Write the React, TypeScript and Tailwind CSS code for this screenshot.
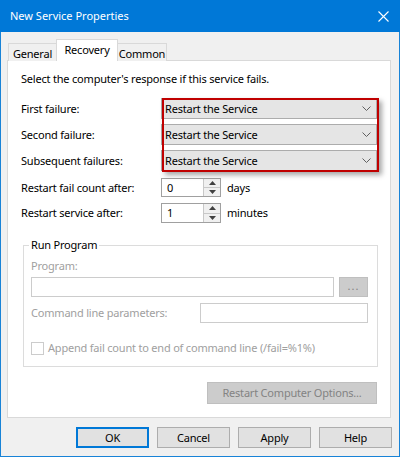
import React from "react";

const font = "font-['Noto_Sans',sans-serif] text-[11px] leading-[16px] tracking-[-0.2px]";

const Chevron = () => (
  <svg width="9" height="5" viewBox="0 0 9 5" className="shrink-0">
    <path d="M0.5 0.5 L4.5 4.5 L8.5 0.5" fill="none" stroke="#606060" strokeWidth="1" />
  </svg>
);

const Combo = ({ value }: { value: string }) => (
  <div className="flex h-[21px] w-[216px] items-center justify-between border border-[#acacac] bg-[#e5e5e5] pl-[3px] pr-[5px] text-black">
    <span>{value}</span>
    <Chevron />
  </div>
);

const Spinner = ({ value, h }: { value: string; h: string }) => (
  <div className={`flex w-[60px] border border-[#a0a0a0] bg-white ${h}`}>
    <div className="flex flex-1 items-center pl-[5px]">{value}</div>
    <div className="flex w-[17px] flex-col border-l border-[#c8c8c8] bg-[#f0f0f0]">
      <div className="flex flex-1 items-center justify-center border-b border-[#c8c8c8]">
        <svg width="7" height="4" viewBox="0 0 7 4">
          <path d="M0 4 L3.5 0 L7 4 Z" fill="#404040" />
        </svg>
      </div>
      <div className="flex flex-1 items-center justify-center">
        <svg width="7" height="4" viewBox="0 0 7 4">
          <path d="M0 0 L3.5 4 L7 0 Z" fill="#404040" />
        </svg>
      </div>
    </div>
  </div>
);

const Row = ({ label, children, className }: { label: string; children: React.ReactNode; className?: string }) => (
  <div className={`flex items-center ${className ?? ""}`}>
    <div className="w-[140px] shrink-0">{label}</div>
    {children}
  </div>
);

const DialogButton = ({ label, primary }: { label: string; primary?: boolean }) => (
  <button
    className={`flex h-[21px] w-[73px] items-center justify-center bg-[#e1e1e1] text-black ${
      primary ? "border-2 border-[#0078d7]" : "border border-[#adadad]"
    }`}
  >
    {label}
  </button>
);

export default function App() {
  return (
    <div className={`flex h-[457px] w-[400px] flex-col border-x border-b border-[#1883d7] bg-[#f0f0f0] text-black ${font}`}>
      {/* title bar */}
      <div className="-mx-px flex h-[32px] shrink-0 items-center justify-between bg-[#0078d7] pl-[10px] pr-[11px] text-white">
        <span className="text-[11px] tracking-normal">New Service Properties</span>
        <svg width="11" height="11" viewBox="0 0 11 11">
          <path d="M0.5 0.5 L10.5 10.5 M10.5 0.5 L0.5 10.5" stroke="white" strokeWidth="1.1" />
        </svg>
      </div>

      {/* tabs */}
      <div className="relative z-10 -mb-px ml-[7px] mt-[7px] flex h-[22px] items-end">
        <div className="flex h-[18px] w-[49px] items-center justify-center border border-b-0 border-[#d9d9d9] bg-[#f0f0f0] pt-[2px]">
          General
        </div>
        <div className="-mx-px flex h-[22px] w-[62px] items-start justify-center border border-b-0 border-[#d9d9d9] bg-white pt-[2px]">
          Recovery
        </div>
        <div className="flex h-[18px] w-[50px] items-center justify-center border border-b-0 border-[#d9d9d9] bg-[#f0f0f0] pt-[2px]">
          Common
        </div>
      </div>

      {/* panel */}
      <div className="relative ml-[6px] flex h-[358px] w-[384px] flex-col border border-[#d9d9d9] bg-white pl-[13px]">
        <div className="mt-[10px] h-4">Select the computer's response if this service fails.</div>

        <Row label="First failure:" className="mt-[11px]">
          <Combo value="Restart the Service" />
        </Row>
        <Row label="Second failure:" className="mt-[5px]">
          <Combo value="Restart the Service" />
        </Row>
        <Row label="Subsequent failures:" className="mt-[5px]">
          <Combo value="Restart the Service" />
        </Row>

        <Row label="Restart fail count after:" className="mt-[7px]">
          <Spinner value="0" h="h-[19px]" />
          <span className="ml-[6px]">days</span>
        </Row>
        <Row label="Restart service after:" className="mt-[6px]">
          <Spinner value="1" h="h-[20px]" />
          <span className="ml-[6px]">minutes</span>
        </Row>

        <fieldset className="ml-[2px] mt-[14px] h-[130px] w-[355px] border border-[#dcdcdc] pl-[5px] pr-[9px]">
          <legend className="px-[2px] text-black">Run Program</legend>
          <div className="ml-[2px] mt-[5px] text-[#a0a0a0]">Program:</div>
          <div className="ml-[2px] mt-[3px] flex gap-[5px]">
            <div className="h-[20px] w-[303px] border border-[#cccccc] bg-white" />
            <div className="flex h-[20px] w-[29px] items-center justify-center border border-[#bfbfbf] bg-[#cccccc] pb-[2px] tracking-[1px] text-[#838383]">
              ...
            </div>
          </div>
          <div className="ml-[2px] mt-[6px] flex items-center justify-between">
            <span className="text-[#a0a0a0]">Command line parameters:</span>
            <div className="h-[20px] w-[168px] border border-[#cccccc] bg-white" />
          </div>
          <div className="ml-[2px] mt-[17px] flex items-center gap-[4px]">
            <div className="h-[13px] w-[13px] border border-[#cccccc] bg-white" />
            <span className="text-[#a0a0a0]">Append fail count to end of command line (/fail=%1%)</span>
          </div>
        </fieldset>

        <div className="mr-[13px] mt-[15px] flex justify-end">
          <div className="flex h-[22px] w-[170px] items-center justify-center border border-[#bfbfbf] bg-[#cccccc] text-[#838383]">
            Restart Computer Options...
          </div>
        </div>

        {/* annotation box */}
        <div className="pointer-events-none absolute left-[154px] top-[37px] h-[74px] w-[217px] border-2 border-[#c00000] shadow-[3px_3px_5px_rgba(0,0,0,0.35)]" />
      </div>

      {/* buttons */}
      <div className="mr-[7px] mt-[9px] flex justify-end gap-[8px]">
        <DialogButton label="OK" primary />
        <DialogButton label="Cancel" />
        <DialogButton label="Apply" />
        <DialogButton label="Help" />
      </div>
    </div>
  );
}
